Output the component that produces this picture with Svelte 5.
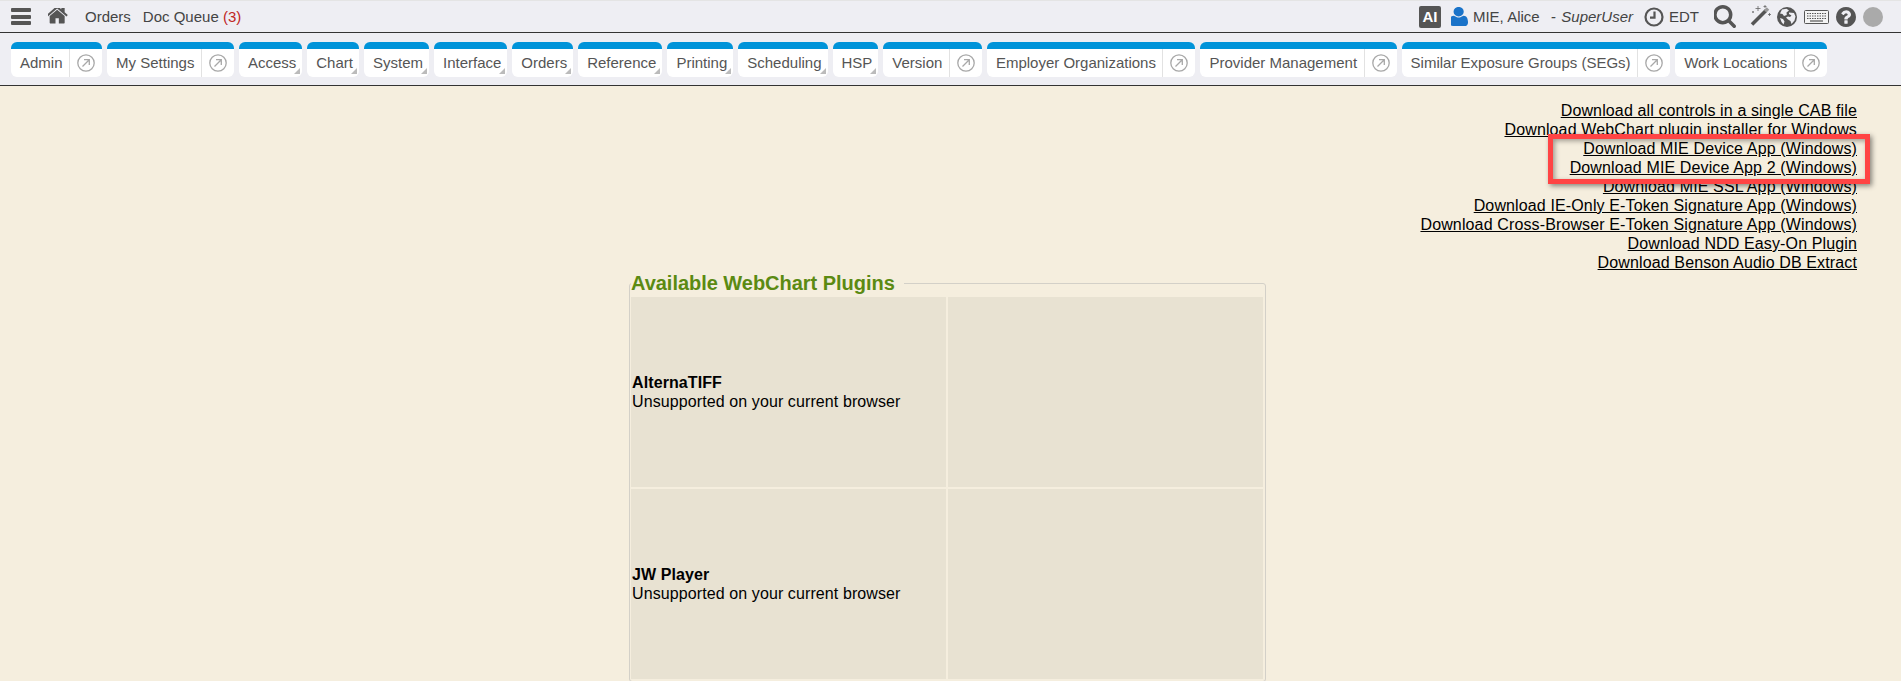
<script>
  const tabs = [
    { label: "Admin", link: true },
    { label: "My Settings", link: true },
    { label: "Access" },
    { label: "Chart" },
    { label: "System" },
    { label: "Interface" },
    { label: "Orders" },
    { label: "Reference" },
    { label: "Printing" },
    { label: "Scheduling" },
    { label: "HSP" },
    { label: "Version", link: true },
    { label: "Employer Organizations", link: true },
    { label: "Provider Management", link: true },
    { label: "Similar Exposure Groups (SEGs)", link: true },
    { label: "Work Locations", link: true },
  ];

  const downloads = [
    "Download all controls in a single CAB file",
    "Download WebChart plugin installer for Windows",
    "Download MIE Device App (Windows)",
    "Download MIE Device App 2 (Windows)",
    "Download MIE SSL App (Windows)",
    "Download IE-Only E-Token Signature App (Windows)",
    "Download Cross-Browser E-Token Signature App (Windows)",
    "Download NDD Easy-On Plugin",
    "Download Benson Audio DB Extract",
  ];

  const plugins = ["AlternaTIFF", "JW Player"];
</script>

<header class="topbar">
  <button class="burger" type="button" aria-label="Menu"><i></i><i></i><i></i></button>
  <svg class="home" viewBox="128 160 1536 1260" preserveAspectRatio="none" aria-label="Home">
    <path d="M1408 768v480q0 26-19 45t-45 19h-384v-384h-256v384h-384q-26 0-45-19t-19-45v-480q0-1 .5-3t.5-3l575-474 575 474q1 2 1 6zm223-69l-62 74q-8 9-21 11h-3q-13 0-21-7l-692-577-692 577q-12 8-24 7-13-2-21-11l-62-74q-8-10-7-23.5t11-21.5l719-599q32-26 76-26t76 26l244 204v-195q0-14 9-23t23-9h192q14 0 23 9t9 23v408l219 182q10 8 11 21.5t-7 23.5z" />
  </svg>
  <span class="nav-link">Orders</span>
  <span class="nav-link queue">Doc Queue <b>(3)</b></span>

  <div class="right">
    <span class="ai">AI</span>
    <svg class="user" viewBox="256 128 1280 1530" preserveAspectRatio="none" aria-label="User">
      <path d="M1536 1399q0 120-73 189.5t-194 69.5h-874q-121 0-194-69.5t-73-189.5q0-53 3.5-103.5t14-109 26.5-108.5 43-97.5 62-81 85.5-53.5 111.5-20q9 0 42 21.5t74.5 48 108 48 133.5 21.5 133.5-21.5 108-48 74.5-48 42-21.5q61 0 111.5 20t85.5 53.5 62 81 43 97.5 26.5 108.5 14 109 3.5 103.5zm-320-893q0 159-112.5 271.5t-271.5 112.5-271.5-112.5-112.5-271.5 112.5-271.5 271.5-112.5 271.5 112.5 112.5 271.5z" />
    </svg>
    <span class="who">MIE, Alice</span>
    <em class="role">- SuperUser</em>
    <svg class="clock" viewBox="0 0 20 20" aria-label="Time zone">
      <circle cx="10" cy="10" r="8.5" />
      <path d="M10.5 4.5v6.2H6" />
    </svg>
    <span class="tz">EDT</span>
    <svg class="search" viewBox="128 128 1600 1664" preserveAspectRatio="none" aria-label="Search">
      <path d="M1216 832q0-185-131.5-316.5t-316.5-131.5-316.5 131.5-131.5 316.5 131.5 316.5 316.5 131.5 316.5-131.5 131.5-316.5zm512 832q0 52-38 90t-90 38q-54 0-90-38l-343-342q-179 124-399 124-143 0-273.5-55.5t-225-150-150-225-55.5-273.5 55.5-273.5 150-225 225-150 273.5-55.5 273.5 55.5 225 150 150 225 55.5 273.5q0 220-124 399l343 343q37 37 37 90z" />
    </svg>
    <svg class="wand" viewBox="0 0 21 21" aria-label="Wand">
      <path class="wand-stick" d="M2 19.5 16 5.5" />
      <path class="wand-tip" d="M15.2 6.3 18 3.5" />
      <path class="wand-spark" d="M8 1v5M5.5 3.5h5M15 0v3M13.5 1.5h3M19.5 8v3M18 9.5h3M3 6v2M2 7h2" />
    </svg>
    <svg class="globe" viewBox="0 0 20 20" aria-label="Language">
      <circle cx="10" cy="10" r="10" />
      <path d="M5 2.5 9.5 1.8 12 3.5 9.5 5.5 9.8 8 7 9 5.5 7 3 6.5ZM12 5.5l5 .5 1.5 3.5-1 4-3 3.5-1-3-2.5-1.5-2-2 2-1 2 .5 1.5-1.5-2.5-1.5ZM3 11l3 1 1.5 2.5-1 3-2-2.5Z" />
    </svg>
    <svg class="keyboard" viewBox="0 0 25 14" aria-label="Keyboard">
      <rect x="0.5" y="0.5" width="24" height="13" rx="1" />
      <path d="M3 3.5h19M3 6h19M3 8.5h19" stroke-dasharray="1.5 1" />
      <path d="M6 11h13" />
    </svg>
    <svg class="help" viewBox="128 128 1536 1536" aria-label="Help">
      <path d="M1024 1376v-192q0-14-9-23t-23-9h-192q-14 0-23 9t-9 23v192q0 14 9 23t23 9h192q14 0 23-9t9-23zm256-672q0-88-55.5-163t-138.5-116-170-41q-243 0-371 213-15 24 8 42l132 100q7 6 19 6 16 0 25-12 53-68 86-92 34-24 86-24 48 0 85.5 26t37.5 59q0 38-20 61t-68 45q-63 28-115.5 86.5t-52.5 125.5v36q0 14 9 23t23 9h192q14 0 23-9t9-23q0-19 21.5-49.5t54.5-49.5q32-18 49-28.5t46-35 44.5-48 28-60.5 12.5-81zm384 192q0 209-103 385.5t-279.5 279.5-385.5 103-385.5-103-279.5-279.5-103-385.5 103-385.5 279.5-279.5 385.5-103 385.5 103 279.5 279.5 103 385.5z" />
    </svg>
    <span class="avatar"></span>
  </div>
</header>

<nav class="tabs">
  {#each tabs as tab}
    <div class="tab" class:has-menu={!tab.link}>
      <span class="tab-label">{tab.label}</span>
      {#if tab.link}
        <span class="tab-open">
          <svg viewBox="0 0 18 18" aria-hidden="true">
            <circle cx="9" cy="9" r="8.2" />
            <path d="M5.5 12.5 12 6M7 5.7h5.3V11" />
          </svg>
        </span>
      {/if}
    </div>
  {/each}
</nav>

<main class="content">
  <div class="downloads">
    {#each downloads as item}
      <a href="#top">{item}</a>
    {/each}
  </div>

  <fieldset class="plugins">
    <legend>Available WebChart Plugins</legend>
    <table>
      <tbody>
        {#each plugins as plugin}
          <tr>
            <td><strong>{plugin}</strong><br />Unsupported on your current browser</td>
            <td></td>
          </tr>
        {/each}
      </tbody>
    </table>
  </fieldset>

  <div class="callout"></div>
</main>

<style>
  :global(html),
  :global(body) {
    height: 100%;
    overflow: hidden;
  }
  :global(body) {
    background: #f5eede;
    font-family: "Liberation Sans", Arial, sans-serif;
    font-size: 16px;
    color: #000;
  }
  .topbar {
    height: 31px;
    box-sizing: content-box;
    display: flex;
    align-items: center;
    padding-left: 11px;
    background: #eeeef3;
    border-top: 1px solid #e4e4e4;
    border-bottom: 1px solid #333;
    font-size: 15px;
    color: #444;
  }
  .burger {
    width: 20px;
    height: 17px;
    padding: 0;
    border: 0;
    background: none;
    display: flex;
    flex-direction: column;
    justify-content: space-between;
  }
  .burger i {
    display: block;
    height: 4px;
    border-radius: 1px;
    background: #555;
  }
  .home {
    width: 20px;
    height: 17px;
    margin-left: 17px;
    fill: #555;
  }
  .nav-link {
    margin-left: 17px;
  }
  .queue {
    margin-left: 12px;
  }
  .queue b {
    font-weight: normal;
    color: #c0271d;
  }
  .right {
    margin-left: auto;
    margin-right: 18px;
    display: flex;
    align-items: center;
  }
  .ai {
    width: 22px;
    height: 22px;
    border-radius: 2px;
    background: #555;
    color: #fff;
    font-weight: bold;
    font-size: 15px;
    line-height: 22px;
    text-align: center;
  }
  .user {
    width: 17px;
    height: 19px;
    margin-left: 10px;
    fill: #1a73c9;
  }
  .who {
    margin-left: 5px;
  }
  .role {
    margin-left: 11px;
    word-spacing: 1.5px;
  }
  .clock {
    width: 20px;
    height: 20px;
    margin-left: 11px;
    fill: none;
    stroke: #555;
    stroke-width: 2.2;
  }
  .tz {
    margin-left: 5px;
  }
  .search {
    width: 22px;
    height: 23px;
    margin-left: 15px;
    fill: #555;
  }
  .wand {
    width: 21px;
    height: 21px;
    margin-left: 14px;
    margin-top: -2px;
    fill: none;
  }
  .wand-stick {
    stroke: #555;
    stroke-width: 3.5;
  }
  .wand-tip {
    stroke: #999;
    stroke-width: 3.5;
  }
  .wand-spark {
    stroke: #666;
    stroke-width: 0.8;
  }
  .globe {
    width: 20px;
    height: 20px;
    margin-left: 6px;
    fill: #555;
  }
  .globe path {
    fill: #eeeef3;
  }
  .keyboard {
    width: 25px;
    height: 14px;
    margin-left: 7px;
    fill: #f4f4f4;
    stroke: #555;
    stroke-width: 1;
  }
  .keyboard path {
    fill: none;
    stroke-width: 1.2;
  }
  .help {
    width: 20px;
    height: 20px;
    margin-left: 7px;
    fill: #555;
  }
  .avatar {
    width: 20px;
    height: 20px;
    margin-left: 7px;
    border-radius: 50%;
    background: #aaa;
  }
  .tabs {
    height: 53px;
    box-sizing: border-box;
    display: flex;
    gap: 5px;
    padding: 9px 0 0 11px;
    background: #eeeef3;
    border-bottom: 1px solid #333;
  }
  .tab {
    position: relative;
    height: 35px;
    box-sizing: border-box;
    display: flex;
    align-items: stretch;
    background: #fff;
    border-top: 7px solid #0093d9;
    border-radius: 6px;
    color: #555;
    font-size: 15px;
    white-space: nowrap;
  }
  .tab-label {
    padding: 0 6.5px 0 9px;
    line-height: 28px;
  }
  .has-menu .tab-label {
    padding-right: 6px;
  }
  .has-menu::after {
    content: "";
    position: absolute;
    right: 2px;
    bottom: 3px;
    border-style: solid;
    border-width: 0 0 6px 6px;
    border-color: transparent transparent #bbb transparent;
  }
  .tab-open {
    width: 33px;
    box-sizing: border-box;
    display: flex;
    align-items: center;
    justify-content: center;
    border-left: 1px solid #e2e2e2;
  }
  .tab-open svg {
    width: 18px;
    height: 18px;
    fill: none;
    stroke: #a8a8a8;
    stroke-width: 1.3;
  }
  .content {
    position: relative;
    padding-top: 15px;
  }
  .downloads {
    display: flex;
    flex-direction: column;
    align-items: flex-end;
    padding-right: 44px;
    line-height: 19px;
    letter-spacing: 0.13px;
  }
  .downloads a {
    color: #000;
  }
  .plugins {
    width: 636px;
    box-sizing: border-box;
    margin: 0 0 0 629px;
    padding: 0;
    border: 1px solid #d3d0c8;
    border-radius: 3px;
  }
  legend {
    margin-left: 1px;
    padding: 0 9px 0 0;
    color: #5b8a12;
    font-size: 20px;
    font-weight: bold;
    line-height: 23px;
    letter-spacing: -0.03px;
  }
  table {
    width: 636px;
    table-layout: fixed;
    border-collapse: separate;
    border-spacing: 2px;
    margin: 0 0 0 -1px;
  }
  td {
    height: 188px;
    padding: 1px;
    background: #e8e2d2;
    vertical-align: middle;
    line-height: 19px;
    letter-spacing: 0.1px;
  }
  strong {
    font-weight: bold;
  }
  .callout {
    position: absolute;
    left: 1548px;
    top: 48px;
    width: 322px;
    height: 50px;
    box-sizing: border-box;
    border: 5px solid #ff4444;
    box-shadow: 2px 2px 5px rgba(0, 0, 0, 0.45), inset 2px 2px 5px rgba(0, 0, 0, 0.35);
  }
</style>
